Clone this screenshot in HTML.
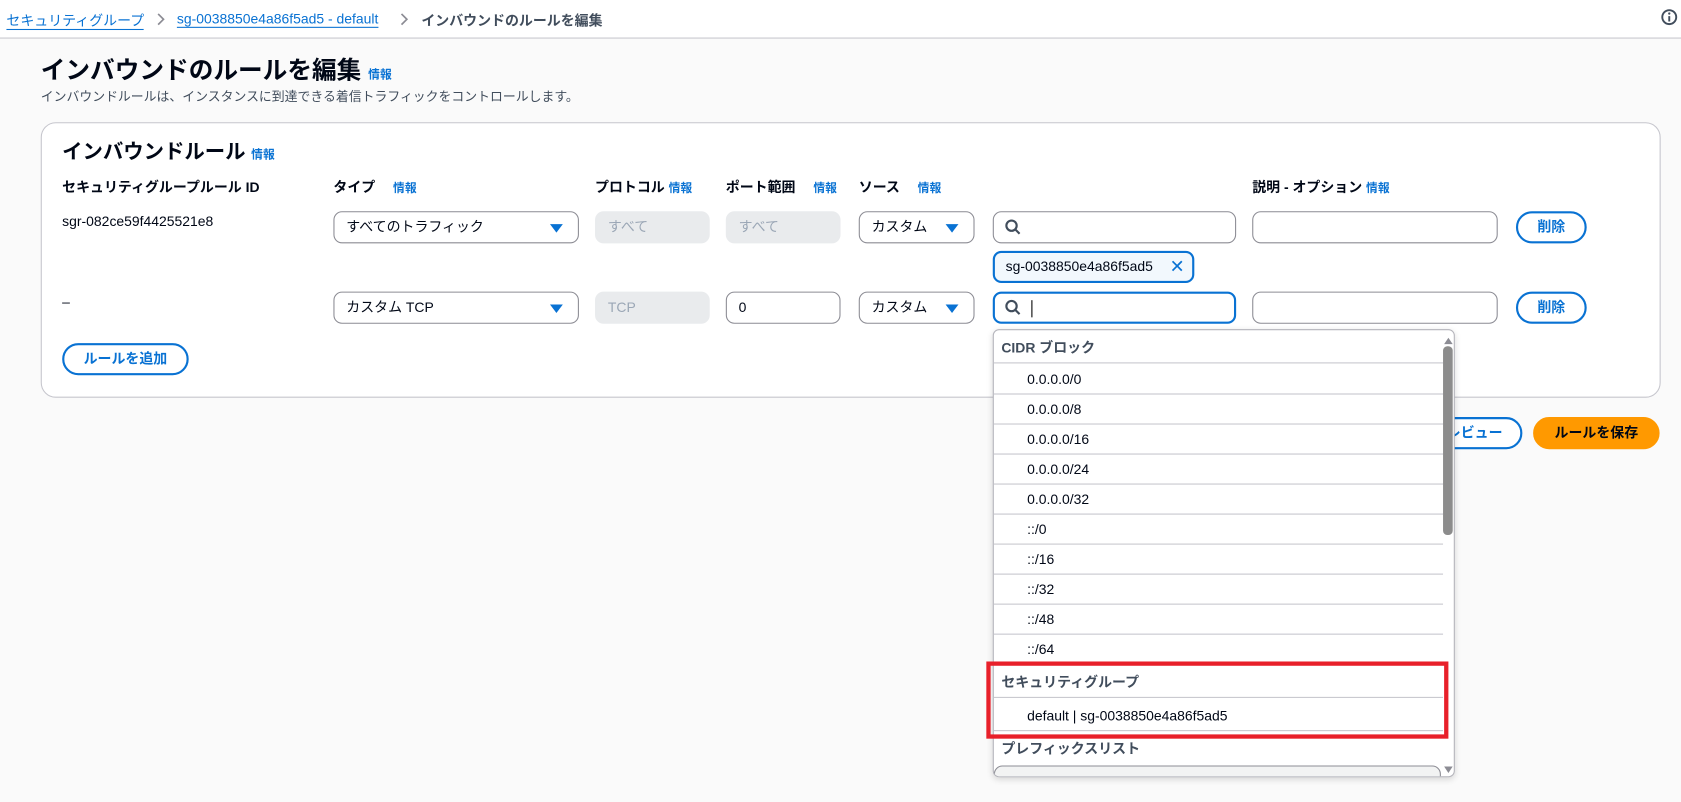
<!DOCTYPE html>
<html><head><meta charset="utf-8"><style>
*{box-sizing:border-box;margin:0;padding:0}
html,body{width:1681px;height:802px;overflow:hidden;background:#fafafa}
body{font-family:"Liberation Sans","Noto Sans CJK JP",sans-serif;color:#000716}
#w{position:absolute;left:0;top:0;width:1568px;height:748px;transform:scale(1.0721);transform-origin:0 0}
.a{position:absolute;white-space:nowrap}
.top{position:absolute;left:0;top:0;width:1568px;height:36px;background:#fff;border-bottom:1px solid #c6c6cd}
.lnk{color:#0972d3;font-size:13px;border-bottom:1px solid #0972d3}
.info{color:#0972d3;font-size:11px;font-weight:bold}
.lab{font-size:13px;font-weight:bold}
.box{position:absolute;height:30px;border:1px solid #8c8c94;border-radius:8px;background:#fff;font-size:13px;line-height:28px;padding-left:11px}
.dis{background:#e9ebed;border-color:#e9ebed;color:#9ba7b6}
.tri{position:absolute;right:14px;top:11px;width:0;height:0;border-left:6px solid transparent;border-right:6px solid transparent;border-top:8px solid #0972d3}
.btn{position:absolute;height:30px;border:2px solid #0972d3;border-radius:16px;color:#0972d3;font-size:13px;font-weight:bold;text-align:center;line-height:26px;background:#fff}
.mg{position:absolute;left:10px;top:6px}
.dd{position:absolute;left:926px;top:307px;width:431px;height:418px;background:#fff;border:1px solid #b4b4bb;border-radius:6px;overflow:hidden;box-shadow:0 2px 6px rgba(0,0,0,.15)}
.it{position:absolute;left:0;width:419px;height:28px;border-bottom:1px solid #c6c6cd;font-size:13px;line-height:28px;padding-left:31px}
.hd{padding-left:7px;font-weight:bold;color:#414d5c}
</style></head><body><div id="w">
<div class="top"></div>
<div class="a" style="left:6px;top:9px"><span class="lnk">セキュリティグループ</span></div>
<svg class="a" style="left:146px;top:12px" width="8" height="12" viewBox="0 0 8 12"><path d="M1.5 1l5 5-5 5" fill="none" stroke="#8c8c94" stroke-width="1.6"/></svg>
<div class="a" style="left:165px;top:9px"><span class="lnk">sg-0038850e4a86f5ad5 - default</span></div>
<svg class="a" style="left:373px;top:12px" width="8" height="12" viewBox="0 0 8 12"><path d="M1.5 1l5 5-5 5" fill="none" stroke="#8c8c94" stroke-width="1.6"/></svg>
<div class="a" style="left:393px;top:9px;font-size:13px;font-weight:bold;color:#414d5c">インバウンドのルールを編集</div>
<svg class="a" style="left:1549px;top:8px" width="16" height="16" viewBox="0 0 16 16"><circle cx="8" cy="8" r="6.5" fill="none" stroke="#414d5c" stroke-width="1.8"/><path d="M8 7v5" stroke="#414d5c" stroke-width="1.8"/><circle cx="8" cy="4.6" r="1.1" fill="#414d5c"/></svg>

<div class="a" style="left:38px;top:46px;font-size:23px;font-weight:bold">インバウンドのルールを編集 <span class="info">情報</span></div>
<div class="a" style="left:38px;top:81px;font-size:12px;color:#414d5c">インバウンドルールは、インスタンスに到達できる着信トラフィックをコントロールします。</div>

<div class="a" style="left:38px;top:114px;width:1511px;height:257px;background:#fff;border:1px solid #c6c6cd;border-radius:14px"></div>
<div class="a" style="left:58px;top:127px;font-size:19px;font-weight:bold">インバウンドルール <span class="info">情報</span></div>
<div class="a lab" style="left:58px;top:164px">セキュリティグループルール ID</div>
<div class="a lab" style="left:311px;top:164px">タイプ　 <span class="info">情報</span></div>
<div class="a lab" style="left:555px;top:164px">プロトコル <span class="info">情報</span></div>
<div class="a lab" style="left:677px;top:164px">ポート範囲　 <span class="info">情報</span></div>
<div class="a lab" style="left:801px;top:164px">ソース　 <span class="info">情報</span></div>
<div class="a lab" style="left:1168px;top:164px">説明 - オプション <span class="info">情報</span></div>

<div class="a" style="left:58px;top:199px;font-size:13px">sgr-082ce59f4425521e8</div>
<div class="box" style="left:311px;top:197px;width:229px">すべてのトラフィック<div class="tri"></div></div>
<div class="box dis" style="left:555px;top:197px;width:107px">すべて</div>
<div class="box dis" style="left:677px;top:197px;width:107px">すべて</div>
<div class="box" style="left:801px;top:197px;width:108px">カスタム<div class="tri"></div></div>
<div class="box" style="left:926px;top:197px;width:227px"><svg class="mg" width="16" height="16" viewBox="0 0 16 16"><circle cx="6.5" cy="6.5" r="4.8" fill="none" stroke="#414d5c" stroke-width="2"/><path d="M10 10l4 4" stroke="#414d5c" stroke-width="2"/></svg></div>
<div class="box" style="left:1168px;top:197px;width:229px"></div>
<div class="btn" style="left:1414px;top:197px;width:66px">削除</div>
<div class="box" style="left:926px;top:234px;width:188px;border:2px solid #0972d3;background:#f2f8fd;line-height:26px;padding-left:10px">sg-0038850e4a86f5ad5 <span style="color:#0972d3;font-size:17px;position:absolute;left:163px;top:0">✕</span></div>

<div class="a" style="left:58px;top:274px;font-size:13px">–</div>
<div class="box" style="left:311px;top:272px;width:229px">カスタム TCP<div class="tri"></div></div>
<div class="box dis" style="left:555px;top:272px;width:107px">TCP</div>
<div class="box" style="left:677px;top:272px;width:107px">0</div>
<div class="box" style="left:801px;top:272px;width:108px">カスタム<div class="tri"></div></div>
<div class="box" style="left:926px;top:272px;width:227px;border:2px solid #0972d3"><svg class="mg" style="left:9px;top:5px" width="16" height="16" viewBox="0 0 16 16"><circle cx="6.5" cy="6.5" r="4.8" fill="none" stroke="#414d5c" stroke-width="2"/><path d="M10 10l4 4" stroke="#414d5c" stroke-width="2"/></svg><div style="position:absolute;left:34px;top:6px;width:1px;height:16px;background:#000"></div></div>
<div class="box" style="left:1168px;top:272px;width:229px"></div>
<div class="btn" style="left:1414px;top:272px;width:66px">削除</div>
<div class="btn" style="left:58px;top:320px;width:118px">ルールを追加</div>

<div class="btn" style="left:1318px;top:389px;width:102px">プレビュー</div>
<div class="btn" style="left:1430px;top:389px;width:118px;background:#ff9900;border-color:#ff9900;color:#000716">ルールを保存</div>

<div class="dd">
<div class="it hd" style="top:3px">CIDR ブロック</div>
<div class="it" style="top:32px">0.0.0.0/0</div>
<div class="it" style="top:60px">0.0.0.0/8</div>
<div class="it" style="top:88px">0.0.0.0/16</div>
<div class="it" style="top:116px">0.0.0.0/24</div>
<div class="it" style="top:144px">0.0.0.0/32</div>
<div class="it" style="top:172px">::/0</div>
<div class="it" style="top:200px">::/16</div>
<div class="it" style="top:228px">::/32</div>
<div class="it" style="top:256px">::/48</div>
<div class="it" style="top:284px">::/64</div>
<div class="it hd" style="top:315px">セキュリティグループ</div>
<div class="it" style="top:346px">default | sg-0038850e4a86f5ad5</div>
<div class="it hd" style="top:377px;border:none">プレフィックスリスト</div>
<div class="a" style="left:0;top:406px;width:417px;height:20px;border:1px solid #8c8c94;border-radius:8px;background:#f2f3f3"></div>
<div class="a" style="left:420px;top:7px;width:0;height:0;border-left:4px solid transparent;border-right:4px solid transparent;border-bottom:6px solid #8c8c94"></div>
<div class="a" style="left:419px;top:15px;width:9px;height:176px;background:#8c8c8c;border-radius:4px"></div>
<div class="a" style="left:420px;top:407px;width:0;height:0;border-left:4px solid transparent;border-right:4px solid transparent;border-top:6px solid #8c8c94"></div>
</div>
<div class="a" style="left:920px;top:617px;width:431px;height:72px;border:4px solid #e8202a"></div>
</div></body></html>
